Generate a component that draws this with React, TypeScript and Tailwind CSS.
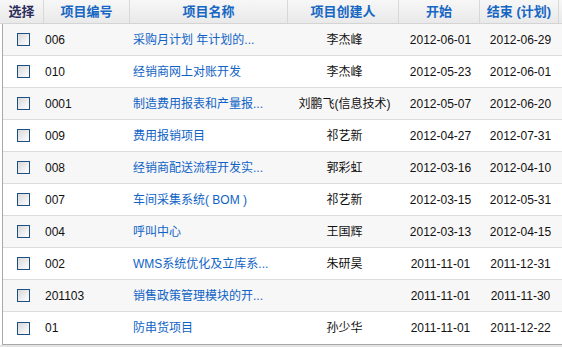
import React from "react";

const rows = [
  ["006", "采购月计划 年计划的...", "李杰峰", "2012-06-01", "2012-06-29"],
  ["010", "经销商网上对账开发", "李杰峰", "2012-05-23", "2012-06-01"],
  ["0001", "制造费用报表和产量报...", "刘鹏飞(信息技术)", "2012-05-07", "2012-06-20"],
  ["009", "费用报销项目", "祁艺新", "2012-04-27", "2012-07-31"],
  ["008", "经销商配送流程开发实...", "郭彩虹", "2012-03-16", "2012-04-10"],
  ["007", "车间采集系统( BOM )", "祁艺新", "2012-03-15", "2012-05-31"],
  ["004", "呼叫中心", "王国辉", "2012-03-13", "2012-04-15"],
  ["002", "WMS系统优化及立库系...", "朱研昊", "2011-11-01", "2011-12-31"],
  ["201103", "销售政策管理模块的开...", "", "2011-11-01", "2011-11-30"],
  ["01", "防串货项目", "孙少华", "2011-11-01", "2011-12-22"],
];

const font = "font-['Liberation_Sans','Noto_Sans_CJK_SC',sans-serif]";

export default function App() {
  return (
    <div className={`w-[562px] h-[347px] bg-[#e4e4e4] overflow-hidden text-[12px] text-[#111] ${font}`}>
      <div className="flex h-[24px] bg-gradient-to-b from-[#f7f7f7] to-[#e9e9e9] border-b border-[#d4d4d4] font-bold text-[13px]">
        <div className="w-[44px] shrink-0 flex items-center justify-center text-[#2c2c5c] border-r border-[#d8d8d8]">选择</div>
        <div className="w-[86px] shrink-0 flex items-center justify-center text-[#1667c4] border-r border-[#d8d8d8]">项目编号</div>
        <div className="w-[158px] shrink-0 flex items-center justify-center text-[#1667c4] border-r border-[#d8d8d8]">项目名称</div>
        <div className="w-[111px] shrink-0 flex items-center justify-center text-[#1667c4] border-r border-[#d8d8d8]">项目创建人</div>
        <div className="w-[81px] shrink-0 flex items-center justify-center text-[#1667c4] border-r border-[#d8d8d8]">开始</div>
        <div className="w-[79px] shrink-0 flex items-center justify-center text-[#1667c4] border-r border-[#d8d8d8] whitespace-nowrap">结束 (计划)</div>
        <div className="flex-1" />
      </div>
      <div className="flex bg-white">
        <div className="w-[2px] shrink-0 bg-white" />
        <div className="flex-1 border-l border-b border-[#a8a8a8]">
          {rows.map((r, i) => (
            <div
              key={i}
              className={`flex h-[32px] items-center ${i < rows.length - 1 ? "border-b border-[#dcdcdc]" : ""} ${i % 2 === 0 ? "bg-[#f7f7f7]" : "bg-white"}`}
            >
              <div className="w-[41px] shrink-0 flex justify-center">
                <div className="w-[13px] h-[13px] border border-[#1d4f86] bg-gradient-to-br from-[#d8d8d8] to-white" />
              </div>
              <div className="w-[87px] shrink-0 pl-[1px]">{r[0]}</div>
              <div className="w-[158px] shrink-0 pl-[2px] text-[#0f63c6] whitespace-nowrap">{r[1]}</div>
              <div className="w-[111px] shrink-0 text-center whitespace-nowrap">{r[2]}</div>
              <div className="w-[81px] shrink-0 text-center">{r[3]}</div>
              <div className="w-[79px] shrink-0 text-center">{r[4]}</div>
            </div>
          ))}
        </div>
      </div>
    </div>
  );
}
